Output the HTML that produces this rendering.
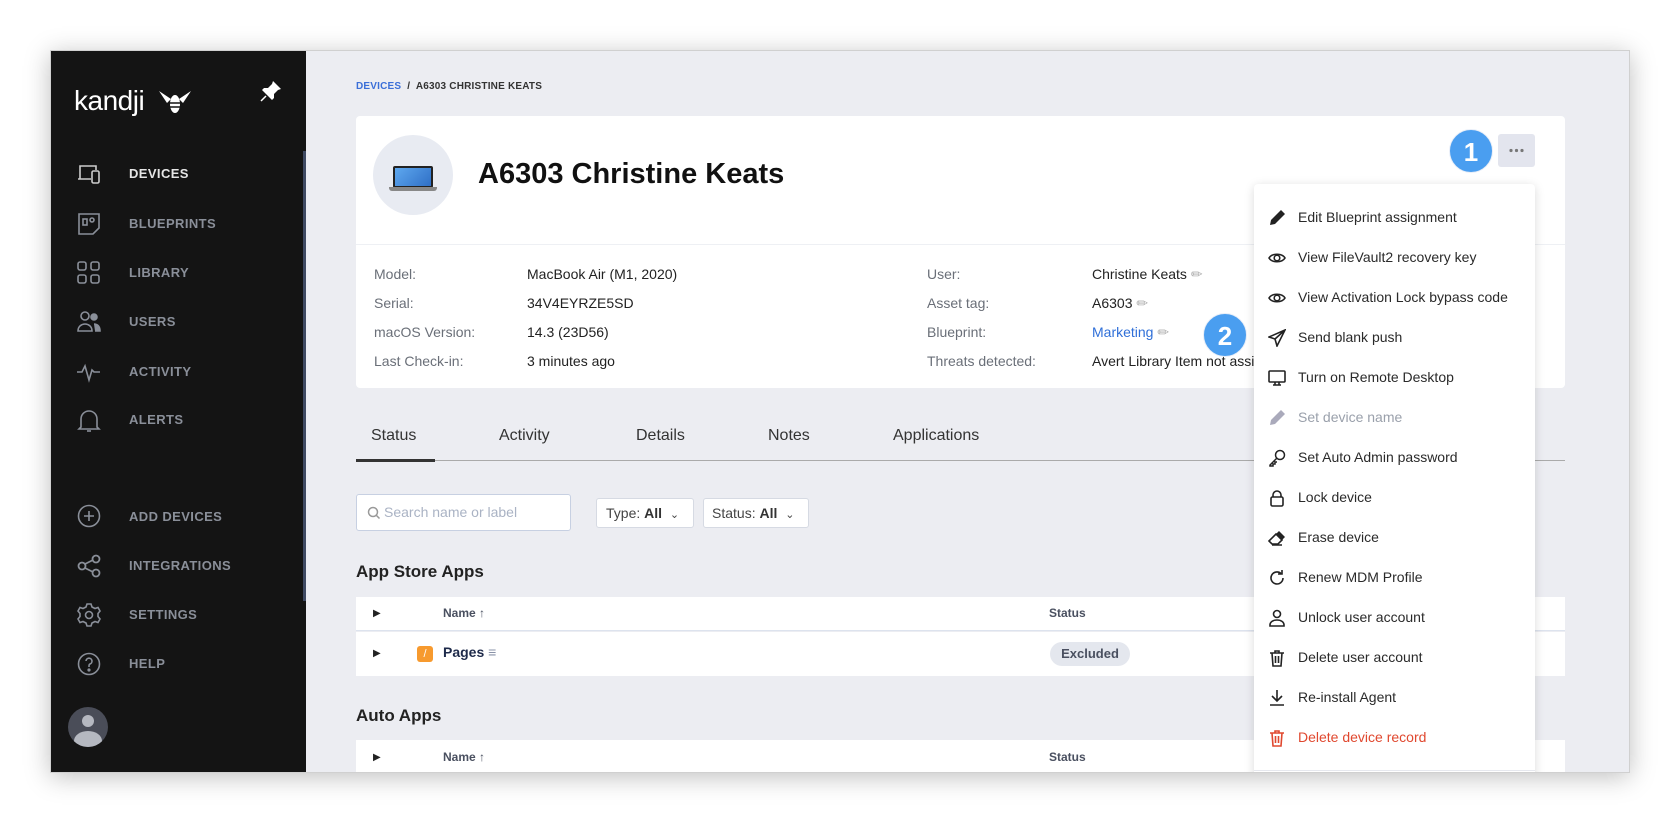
<!DOCTYPE html>
<html><head><meta charset="utf-8"><style>
*{box-sizing:border-box;margin:0;padding:0}
body{width:1680px;height:824px;background:#fff;font-family:"Liberation Sans",sans-serif;position:relative;overflow:hidden}
.win{position:absolute;left:50px;top:50px;width:1580px;height:723px;background:#ecedf2;box-shadow:0 4px 24px rgba(0,0,0,.25);border:1px solid #d0d0d0;overflow:hidden}
.side{position:absolute;left:0;top:0;width:255px;height:100%;background:#141414}
.sbar{position:absolute;left:252px;top:100px;width:3px;height:450px;background:#3f4a63}
.abs{position:absolute}
.nav{position:absolute;left:78px;font-size:13px;font-weight:bold;letter-spacing:.4px;color:#8a8f99}
.ico{position:absolute;left:26px}
.card{position:absolute;background:#fff;border-radius:4px}
.lbl{position:absolute;font-size:14px;color:#6a6f78}
.val{position:absolute;font-size:14px;color:#222}
.tab{position:absolute;top:376px;font-size:16px;color:#333}
.menu{position:absolute;left:1203px;top:133px;width:281px;height:600px;background:#fff;border-radius:4px;box-shadow:0 2px 10px rgba(0,0,0,.15)}
.mi{position:absolute;left:44px;font-size:14px;color:#2a2a2a}
.mico{position:absolute;left:14px;width:18px;height:18px}
.badge{position:absolute;width:44px;height:44px;border-radius:50%;background:#4a9ef0;color:#fff;font-weight:bold;font-size:26px;text-align:center;line-height:44px;border:1px solid #e8eef8}
</style></head><body>
<div class="win">
 <div class="side">
  <div class="abs" style="left:23px;top:34px;color:#fff;font-size:28px;letter-spacing:-0.5px">kandji</div>
  <svg class="abs" style="left:106px;top:38px" width="36" height="28" viewBox="0 0 36 28"><path d="M2 2 L14 10 L10 14 Z M34 2 L22 10 L26 14 Z" fill="#fff"/><ellipse cx="18" cy="15" rx="5" ry="9" fill="#fff"/><path d="M13 14h10M13 18h10" stroke="#141414" stroke-width="1.5"/></svg>
  <svg class="abs" style="left:208px;top:28px" width="24" height="24" viewBox="0 0 24 24"><path d="M14 2 L22 10 L19 11 L15 15 L15 19 L13 21 L3 11 L5 9 L9 9 L13 5 Z" fill="#fff"/><path d="M7 17 L2 22" stroke="#fff" stroke-width="1.5"/></svg>
  <div class="sbar"></div>
  <svg class="ico" style="top:112px" width="26" height="22" viewBox="0 0 26 22" fill="none" stroke="#ccc" stroke-width="1.6"><path d="M3 16V3h16v4M1 16h13"/><rect x="15" y="8" width="7" height="12" rx="1.5"/></svg>
  <div class="nav" style="top:115px;color:#e6e6e6">DEVICES</div>
  <svg class="ico" style="top:161px" width="24" height="24" viewBox="0 0 24 24" fill="none" stroke="#8a8f99" stroke-width="1.6"><path d="M2 2h20v14l-6 6H2z"/><rect x="6" y="7" width="4" height="6"/><circle cx="15" cy="8" r="2"/></svg>
  <div class="nav" style="top:165px">BLUEPRINTS</div>
  <svg class="ico" style="top:210px" width="24" height="24" viewBox="0 0 24 24" fill="none" stroke="#8a8f99" stroke-width="1.6"><rect x="1" y="1" width="8" height="8" rx="2"/><rect x="14" y="1" width="8" height="8" rx="2"/><rect x="1" y="14" width="8" height="8" rx="2"/><rect x="14" y="14" width="8" height="8" rx="2"/></svg>
  <div class="nav" style="top:214px">LIBRARY</div>
  <svg class="ico" style="top:259px" width="24" height="24" viewBox="0 0 24 24" fill="none" stroke="#8a8f99" stroke-width="1.6"><circle cx="8" cy="6" r="4"/><path d="M1 21c0-5 4-7 7-7s7 2 7 7z"/><circle cx="17" cy="7" r="3" fill="#8a8f99"/><path d="M17 14c3 0 6 2 6 7h-5" fill="#8a8f99"/></svg>
  <div class="nav" style="top:263px">USERS</div>
  <svg class="ico" style="top:309px" width="24" height="24" viewBox="0 0 24 24" fill="none" stroke="#8a8f99" stroke-width="1.6"><path d="M0 12h5l3-6 4 14 3-10 2 2h6"/></svg>
  <div class="nav" style="top:313px">ACTIVITY</div>
  <svg class="ico" style="top:357px" width="24" height="26" viewBox="0 0 24 26" fill="none" stroke="#8a8f99" stroke-width="1.6"><path d="M4 19V11a8 8 0 0 1 16 0v8l2 2H2z"/><path d="M10 23h4"/></svg>
  <div class="nav" style="top:361px">ALERTS</div>
  <svg class="ico" style="top:453px" width="24" height="24" viewBox="0 0 24 24" fill="none" stroke="#8a8f99" stroke-width="1.6"><circle cx="12" cy="12" r="10.5"/><path d="M12 7v10M7 12h10"/></svg>
  <div class="nav" style="top:458px">ADD DEVICES</div>
  <svg class="ico" style="top:503px" width="24" height="24" viewBox="0 0 24 24" fill="none" stroke="#8a8f99" stroke-width="1.8"><circle cx="5" cy="12" r="3.5"/><circle cx="19" cy="5" r="3.5"/><circle cx="19" cy="19" r="3.5"/><path d="M8 10l8-4M8 14l8 4"/></svg>
  <div class="nav" style="top:507px">INTEGRATIONS</div>
  <svg class="ico" style="top:552px" width="24" height="24" viewBox="0 0 24 24" fill="none" stroke="#8a8f99" stroke-width="1.6"><circle cx="12" cy="12" r="3.5"/><path d="M10 1h4l1 3 3 1.5 3-1 2 3.5-2 2.5v3l2 2.5-2 3.5-3-1-3 1.5-1 3h-4l-1-3-3-1.5-3 1-2-3.5 2-2.5v-3l-2-2.5 2-3.5 3 1 3-1.5z"/></svg>
  <div class="nav" style="top:556px">SETTINGS</div>
  <svg class="ico" style="top:601px" width="24" height="24" viewBox="0 0 24 24" fill="none" stroke="#8a8f99" stroke-width="1.6"><circle cx="12" cy="12" r="10.5"/><path d="M9 9a3 3 0 1 1 4 3c-1 .5-1 1-1 3"/><circle cx="12" cy="18" r=".8" fill="#8a8f99"/></svg>
  <div class="nav" style="top:605px">HELP</div>
  <div class="abs" style="left:17px;top:656px;width:40px;height:40px;border-radius:50%;background:#4a4d58;overflow:hidden"><div class="abs" style="left:14px;top:8px;width:12px;height:12px;border-radius:50%;background:#b5b8c0"></div><div class="abs" style="left:6px;top:24px;width:28px;height:20px;border-radius:50%;background:#b5b8c0"></div></div>
 </div>

 <div class="abs" style="left:305px;top:30px;font-size:10px;font-weight:bold;color:#333;letter-spacing:.2px"><span style="color:#3b6fd8">DEVICES</span> &nbsp;/&nbsp; A6303 CHRISTINE KEATS</div>
 <div class="card" style="left:305px;top:65px;width:1209px;height:272px">
  <div class="abs" style="left:17px;top:19px;width:80px;height:80px;border-radius:50%;background:#e8ebf2"></div>
  <div class="abs" style="left:37px;top:50px;width:40px;height:22px;background:#2d6fc4;border:2px solid #222;border-radius:2px"><div style="width:100%;height:100%;background:linear-gradient(135deg,#5ea8ef,#2f6fc6)"></div></div>
  <div class="abs" style="left:33px;top:71px;width:48px;height:4px;background:#888;border-radius:0 0 3px 3px"></div>
  <div class="abs" style="left:122px;top:42px;font-size:29px;font-weight:bold;color:#111">A6303 Christine Keats</div>
  <div class="abs" style="left:0;top:128px;width:100%;height:1px;background:#eef0f4"></div>
  <div class="lbl" style="left:18px;top:150px">Model:</div><div class="val" style="left:171px;top:150px">MacBook Air (M1, 2020)</div>
  <div class="lbl" style="left:18px;top:179px">Serial:</div><div class="val" style="left:171px;top:179px">34V4EYRZE5SD</div>
  <div class="lbl" style="left:18px;top:208px">macOS Version:</div><div class="val" style="left:171px;top:208px">14.3 (23D56)</div>
  <div class="lbl" style="left:18px;top:237px">Last Check-in:</div><div class="val" style="left:171px;top:237px">3 minutes ago</div>
  <div class="lbl" style="left:571px;top:150px">User:</div><div class="val" style="left:736px;top:150px">Christine Keats <span style="color:#aaa">&#9999;</span></div>
  <div class="lbl" style="left:571px;top:179px">Asset tag:</div><div class="val" style="left:736px;top:179px">A6303 <span style="color:#aaa">&#9999;</span></div>
  <div class="lbl" style="left:571px;top:208px">Blueprint:</div><div class="val" style="left:736px;top:208px"><span style="color:#2f6fd8">Marketing</span> <span style="color:#aaa">&#9999;</span></div>
  <div class="lbl" style="left:571px;top:237px">Threats detected:</div><div class="val" style="left:736px;top:237px">Avert Library Item not assigned</div>
 </div>
 <div class="tab" style="left:320px">Status</div>
 <div class="tab" style="left:448px">Activity</div>
 <div class="tab" style="left:585px">Details</div>
 <div class="tab" style="left:717px">Notes</div>
 <div class="tab" style="left:842px">Applications</div>
 <div class="abs" style="left:305px;top:409px;width:1209px;height:1px;background:#aaa"></div>
 <div class="abs" style="left:305px;top:408px;width:79px;height:3px;background:#333"></div>

 <div class="abs" style="left:305px;top:443px;width:215px;height:37px;background:#fff;border:1px solid #c7d0e2;border-radius:3px"></div>
 <svg class="abs" style="left:316px;top:455px" width="14" height="14" viewBox="0 0 14 14" fill="none" stroke="#999" stroke-width="1.5"><circle cx="6" cy="6" r="4.5"/><path d="M9.5 9.5l3 3"/></svg>
 <div class="abs" style="left:333px;top:453px;font-size:14px;color:#aab3c4">Search name or label</div>
 <div class="abs" style="left:545px;top:447px;width:98px;height:30px;background:#fff;border:1px solid #d6dae3;border-radius:3px;font-size:14px;color:#444;padding:6px 9px">Type: <b style="color:#333">All</b> <span style="font-size:11px;margin-left:4px">&#8964;</span></div>
 <div class="abs" style="left:652px;top:447px;width:106px;height:30px;background:#fff;border:1px solid #d6dae3;border-radius:3px;font-size:14px;color:#444;padding:6px 8px">Status: <b style="color:#333">All</b> <span style="font-size:11px;margin-left:4px">&#8964;</span></div>

 <div class="abs" style="left:305px;top:511px;font-size:17px;font-weight:bold;color:#222">App Store Apps</div>
 <div class="abs" style="left:305px;top:546px;width:1209px;height:34px;background:#fff;border-bottom:1px solid #dde3ee"></div>
 <div class="abs" style="left:305px;top:581px;width:1209px;height:44px;background:#fff"></div>
 <div class="abs" style="left:322px;top:557px;font-size:10px;color:#222">&#9654;</div>
 <div class="abs" style="left:392px;top:555px;font-size:12px;font-weight:bold;color:#4a5060">Name &#8593;</div>
 <div class="abs" style="left:998px;top:555px;font-size:12px;font-weight:bold;color:#4a5060">Status</div>
 <div class="abs" style="left:322px;top:597px;font-size:10px;color:#222">&#9654;</div>
 <div class="abs" style="left:366px;top:595px;width:16px;height:16px;background:#f79a2e;border-radius:3px;color:#fff;font-size:11px;text-align:center;line-height:16px">/</div>
 <div class="abs" style="left:392px;top:593px;font-size:14px;font-weight:bold;color:#1e2a4a">Pages <span style="color:#8a93a8;font-weight:normal">&#8801;</span></div>
 <div class="abs" style="left:999px;top:591px;width:80px;height:24px;background:#e4e7ee;border-radius:12px;font-size:13px;font-weight:bold;color:#4a5060;text-align:center;line-height:24px">Excluded</div>

 <div class="abs" style="left:305px;top:655px;font-size:17px;font-weight:bold;color:#222">Auto Apps</div>
 <div class="abs" style="left:305px;top:689px;width:1209px;height:40px;background:#fff"></div>
 <div class="abs" style="left:322px;top:701px;font-size:10px;color:#222">&#9654;</div>
 <div class="abs" style="left:392px;top:699px;font-size:12px;font-weight:bold;color:#4a5060">Name &#8593;</div>
 <div class="abs" style="left:998px;top:699px;font-size:12px;font-weight:bold;color:#4a5060">Status</div>

 <div class="abs" style="left:1447px;top:83px;width:37px;height:33px;background:#e3e5ee;border-radius:3px"><svg width="37" height="33"><circle cx="13" cy="16.5" r="1.6" fill="#777"/><circle cx="18.5" cy="16.5" r="1.6" fill="#777"/><circle cx="24" cy="16.5" r="1.6" fill="#777"/></svg></div>
 <div class="badge" style="left:1398px;top:78px">1</div>
 <div class="badge" style="left:1152px;top:262px">2</div>

 <div class="menu">
  <div class="mi" style="top:25px">Edit Blueprint assignment</div>
  <div class="mi" style="top:65px">View FileVault2 recovery key</div>
  <div class="mi" style="top:105px">View Activation Lock bypass code</div>
  <div class="mi" style="top:145px">Send blank push</div>
  <div class="mi" style="top:185px">Turn on Remote Desktop</div>
  <div class="mi" style="top:225px;color:#9aa0ab">Set device name</div>
  <div class="mi" style="top:265px">Set Auto Admin password</div>
  <div class="mi" style="top:305px">Lock device</div>
  <div class="mi" style="top:345px">Erase device</div>
  <div class="mi" style="top:385px">Renew MDM Profile</div>
  <div class="mi" style="top:425px">Unlock user account</div>
  <div class="mi" style="top:465px">Delete user account</div>
  <div class="mi" style="top:505px">Re-install Agent</div>
  <div class="mi" style="top:545px;color:#e0482f">Delete device record</div>
  <svg class="mico" style="top:25px" viewBox="0 0 18 18" fill="#222"><path d="M13 1l4 4-10 10-5 1 1-5z"/></svg>
  <svg class="mico" style="top:65px" viewBox="0 0 18 18" fill="none" stroke="#222" stroke-width="1.6"><path d="M1 9c3-5 13-5 16 0-3 5-13 5-16 0z"/><circle cx="9" cy="9" r="2.8"/></svg>
  <svg class="mico" style="top:105px" viewBox="0 0 18 18" fill="none" stroke="#222" stroke-width="1.6"><path d="M1 9c3-5 13-5 16 0-3 5-13 5-16 0z"/><circle cx="9" cy="9" r="2.8"/></svg>
  <svg class="mico" style="top:145px" viewBox="0 0 18 18" fill="none" stroke="#222" stroke-width="1.6"><path d="M17 1L1 8l6 2 2 7z M7 10l10-9"/></svg>
  <svg class="mico" style="top:185px" viewBox="0 0 18 18" fill="none" stroke="#222" stroke-width="1.6"><rect x="1" y="2" width="16" height="11" rx="1"/><path d="M7 13v3M11 13v3M5 16h8"/></svg>
  <svg class="mico" style="top:225px" viewBox="0 0 18 18" fill="#aab"><path d="M13 1l4 4-10 10-5 1 1-5z"/></svg>
  <svg class="mico" style="top:265px" viewBox="0 0 18 18" fill="none" stroke="#222" stroke-width="1.5"><circle cx="12" cy="6" r="4.5"/><path d="M9 9l-7 7v1h3v-2h2v-2h2"/></svg>
  <svg class="mico" style="top:305px" viewBox="0 0 18 18" fill="none" stroke="#222" stroke-width="1.6"><rect x="3" y="8" width="12" height="9" rx="1.5"/><path d="M5 8V6a4 4 0 0 1 8 0v2"/></svg>
  <svg class="mico" style="top:345px" viewBox="0 0 18 18"><path d="M1 12l7-7 6 6-4 4H4z" fill="none" stroke="#222" stroke-width="1.6"/><path d="M8 5l3-3 6 6-3 3z" fill="#222"/><path d="M4 16h10" stroke="#222" stroke-width="1.5"/></svg>
  <svg class="mico" style="top:385px" viewBox="0 0 18 18" fill="none" stroke="#222" stroke-width="1.6"><path d="M15 9a6 6 0 1 1-2-4.5"/><path d="M14 1v4h-4"/></svg>
  <svg class="mico" style="top:425px" viewBox="0 0 18 18" fill="none" stroke="#222" stroke-width="1.6"><circle cx="9" cy="5" r="3.5"/><path d="M2 17v-1c0-3 3-5 7-5s7 2 7 5v1z"/></svg>
  <svg class="mico" style="top:465px" viewBox="0 0 18 18" fill="none" stroke="#222" stroke-width="1.6"><path d="M2 4h14M7 4V2h4v2M4 4l1 13h8l1-13M7.5 7v7M10.5 7v7"/></svg>
  <svg class="mico" style="top:505px" viewBox="0 0 18 18" fill="none" stroke="#222" stroke-width="1.6"><path d="M9 1v11M4 7l5 5 5-5M2 16h14"/></svg>
  <svg class="mico" style="top:545px" viewBox="0 0 18 18" fill="none" stroke="#e0482f" stroke-width="1.6"><path d="M2 4h14M7 4V2h4v2M4 4l1 13h8l1-13M7.5 7v7M10.5 7v7"/></svg>
  <div class="abs" style="left:0;top:586px;width:100%;height:1px;background:#e6e8ee"></div>
 </div>
</div>
</body></html>
